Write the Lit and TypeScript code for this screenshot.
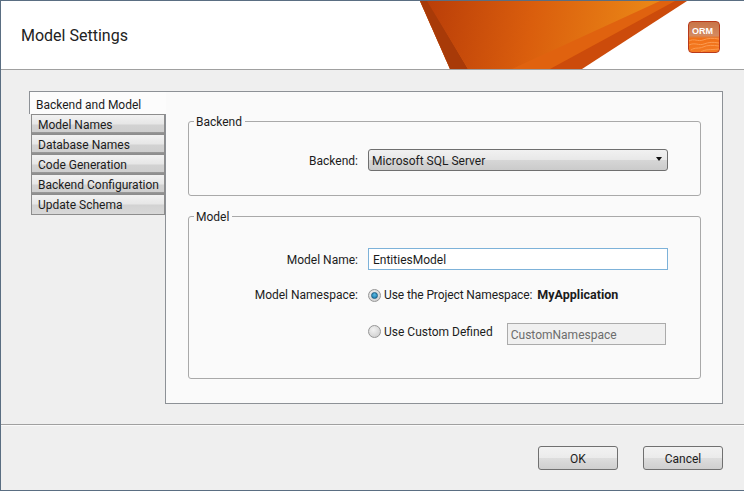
import { css, html, LitElement } from "lit";
import { customElement } from "lit/decorators.js";

const TABS = [
  "Model Names",
  "Database Names",
  "Code Generation",
  "Backend Configuration",
  "Update Schema",
];

@customElement("app-root")
export class AppRoot extends LitElement {
  static styles = css`
    :host {
      display: block;
      width: 744px;
      height: 491px;
      box-sizing: border-box;
      border: 1px solid #5a6e82;
      border-right: 0;
      background: #efefef;
      color: #1c1c1c;
      font: 12px/16px Roboto, "Noto Sans", sans-serif;
      overflow: hidden;
    }

    .header {
      position: relative;
      height: 68px;
      background: #fff;
      border-bottom: 1px solid #a0a0a0;
      display: flex;
      align-items: center;
      justify-content: space-between;
      padding: 0 24px 0 20px;
      overflow: hidden;
    }

    .title {
      font-size: 16px;
      line-height: 22px;
      color: #222;
      margin-top: 2px;
    }

    .banner {
      position: absolute;
      left: 419px;
      top: 0;
    }

    .orm {
      position: relative;
      width: 32px;
      height: 32px;
      box-sizing: border-box;
      margin-top: 3px;
      border: 1px solid #b8391a;
      border-radius: 4px;
      background: linear-gradient(#c87448, #d48a60 45%, #f07018 55%, #f47a22);
      overflow: hidden;
    }

    .orm svg {
      position: absolute;
      left: 0;
      bottom: 0;
    }

    .orm span {
      position: absolute;
      left: 3px;
      top: 4px;
      font: bold 9px/10px "Liberation Sans", sans-serif;
      color: #fff;
    }

    .content {
      height: 354px;
      box-sizing: border-box;
      padding: 20px 21px 0 28px;
      border-top: 1px solid #efefef;
      display: flex;
      align-items: flex-start;
    }

    .tabs {
      width: 137px;
      flex: none;
      margin-right: -1px;
      position: relative;
      z-index: 1;
      display: flex;
      flex-direction: column;
    }

    .tab {
      height: 20px;
      margin-left: 2px;
      width: 134px;
      box-sizing: border-box;
      border: 1px solid #8d8d8d;
      border-bottom-width: 0;
      padding-left: 6px;
      line-height: 20px;
      background: linear-gradient(#f2f2f2, #e6e6e6 48%, #d2d2d2 52%, #cfcfcf 88%, #9a9a9a 90%, #8d8d8d);
      white-space: nowrap;
    }

    .tab:last-child {
      height: 21px;
      border-bottom-width: 1px;
      background: linear-gradient(#f2f2f2, #e6e6e6 48%, #d2d2d2 52%, #d8d8d8);
    }

    .tab.selected {
      width: 137px;
      height: 23px;
      margin-left: 0;
      padding-left: 6px;
      line-height: 26px;
      background: #fcfcfc;
      border: 1px solid #8d9196;
      border-right: 0;
      border-bottom: 0;
    }

    .panel {
      width: 558px;
      height: 313px;
      flex: none;
      box-sizing: border-box;
      border: 1px solid #8d9196;
      background: #fafafa;
      padding: 21px 21px 0 22px;
      display: flex;
      flex-direction: column;
      gap: 12px;
    }

    fieldset {
      margin: 0;
      min-width: 0;
      border: 1px solid #a9a9a9;
      border-radius: 3px;
    }

    legend {
      margin-left: 5px;
      padding: 1px 3px 0 2px;
      line-height: 16px;
    }

    .backend {
      padding: 19px 0 24px;
    }

    .model {
      padding: 23px 0 33px;
    }

    .form {
      display: grid;
      grid-template-columns: 169px 300px;
      column-gap: 10px;
      align-items: start;
    }

    .label {
      text-align: right;
      height: 21px;
      padding-top: 1px;
      line-height: 22px;
    }

    .label.plain {
      height: 16px;
      padding-top: 0;
      line-height: 16px;
    }

    .select {
      height: 22px;
      box-sizing: border-box;
      border: 1px solid #6f6f6f;
      border-radius: 3px;
      padding: 2px 0 0 3px;
      line-height: 18px;
      display: flex;
      justify-content: space-between;
      align-items: center;
      background: linear-gradient(#f1f1f1, #e8e8e8 48%, #d6d6d6 52%, #cbcbcb);
    }

    .arrow {
      width: 0;
      height: 0;
      margin-right: 5px;
      margin-top: -4px;
      border: 3.5px solid transparent;
      border-top: 4px solid #111;
      border-bottom: 0;
    }

    .input {
      height: 22px;
      box-sizing: border-box;
      border: 1px solid #7db2d9;
      background: #fff;
      padding: 1px 0 0 4px;
      line-height: 20px;
    }

    .namespace {
      grid-column: 2;
    }

    .row-2 {
      margin-top: 17px;
    }

    .row-3 {
      margin-top: 20px;
    }

    .radio-row {
      display: flex;
      align-items: center;
      white-space: nowrap;
    }

    .radio-row.custom {
      align-items: flex-start;
      height: 22px;
    }

    .radio {
      width: 13px;
      height: 13px;
      box-sizing: border-box;
      margin-right: 3px;
      border: 1px solid #969696;
      border-radius: 50%;
      background: radial-gradient(circle at 40% 35%, #f2f2f2, #c8c8c8);
      display: flex;
      flex: none;
      align-items: center;
      justify-content: center;
    }

    .custom .radio {
      margin-top: 2px;
    }

    .custom .radio-text {
      padding-top: 1px;
    }

    .radio i {
      width: 7px;
      height: 7px;
      box-sizing: border-box;
      border: 1px solid #1d5f85;
      border-radius: 50%;
      background: radial-gradient(circle at 50% 35%, #5ab8e0, #0f74a8);
    }

    .tight {
      letter-spacing: -0.1px;
    }

    .app-name {
      font-weight: 700;
      margin-left: 5px;
      font-size: 12.5px;
    }

    .custom-input {
      width: 159px;
      height: 22px;
      box-sizing: border-box;
      margin-left: 14px;
      border: 1px solid #ababab;
      background: #f0f0f0;
      color: #6d6d6d;
      padding: 1px 0 0 3px;
      line-height: 20px;
    }

    .footer {
      border-top: 1px solid #a0a0a0;
      box-shadow: inset 0 1px 0 #fafafa;
      padding: 21px 21px 0 0;
      display: flex;
      justify-content: flex-end;
      gap: 25px;
    }

    button {
      width: 80px;
      height: 24px;
      padding: 2px 0 0;
      border: 1px solid #707070;
      border-radius: 3px;
      font: inherit;
      color: inherit;
      background: linear-gradient(#f2f2f2, #ebebeb 48%, #dddddd 52%, #cfcfcf);
    }
  `;

  render() {
    return html`
      <div class="header">
        <div class="title">Model Settings</div>
        <svg class="banner" width="270" height="68" viewBox="0 0 270 68">
          <defs>
            <linearGradient id="main" x1="0" y1="0" x2="225" y2="35" gradientUnits="userSpaceOnUse">
              <stop offset="0" stop-color="#b83c08" />
              <stop offset="0.5" stop-color="#da5e0d" />
              <stop offset="1" stop-color="#ea8516" />
            </linearGradient>
          </defs>
          <polygon points="0,0 267,0 162,68 30,68" fill="#cc4b0b" />
          <polygon points="0,0 255,0 130,68 30,68" fill="#e0620f" />
          <polygon points="0,0 8,0 48,68 30,68" fill="#a83a08" />
          <polygon points="7,0 240,0 92,68 48,68" fill="url(#main)" />
        </svg>
        <div class="orm">
          <svg width="30" height="16" viewBox="0 0 30 16" fill="none" stroke="#fb9a50" stroke-width="1">
            <path d="M0 5c5-3 9 1 14-1s10-2 16-1M0 9c6-3 10 1 15-1s9-2 15-1M2 14c4-3 8-1 12-3s10-2 16-1M12 16c4-3 9-2 18-3" />
          </svg>
          <span>ORM</span>
        </div>
      </div>

      <div class="content">
        <div class="tabs">
          <div class="tab selected">Backend and Model</div>
          ${TABS.map((t) => html`<div class="tab">${t}</div>`)}
        </div>
        <div class="panel">
          <fieldset class="backend">
            <legend>Backend</legend>
            <div class="form">
              <div class="label">Backend:</div>
              <div class="select">
                <span>Microsoft SQL Server</span>
                <span class="arrow"></span>
              </div>
            </div>
          </fieldset>
          <fieldset class="model">
            <legend>Model</legend>
            <div class="form">
              <div class="label">Model Name:</div>
              <div class="input">EntitiesModel</div>
              <div class="label plain row-2">Model Namespace:</div>
              <div class="radio-row row-2">
                <span class="radio"><i></i></span>
                <span class="radio-text tight">Use the Project Namespace:</span>
                <span class="app-name">MyApplication</span>
              </div>
              <div class="radio-row custom row-3 namespace">
                <span class="radio"></span>
                <span class="radio-text">Use Custom Defined</span>
                <div class="custom-input">CustomNamespace</div>
              </div>
            </div>
          </fieldset>
        </div>
      </div>

      <div class="footer">
        <button>OK</button>
        <button>Cancel</button>
      </div>
    `;
  }
}
